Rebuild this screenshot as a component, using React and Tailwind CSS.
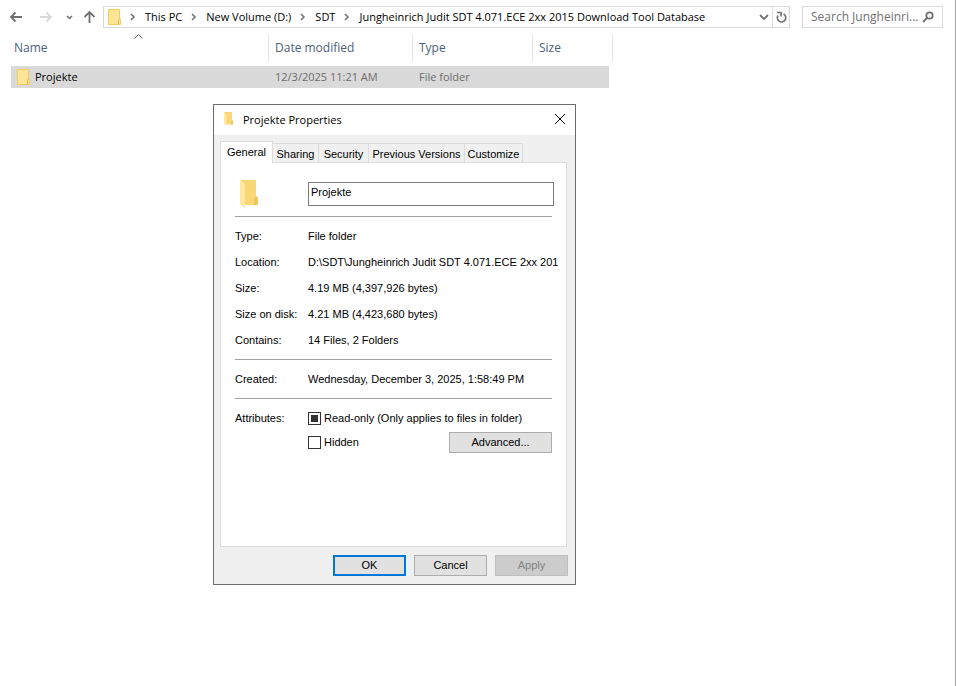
import React, { useEffect, useRef } from 'react';

const crumbs = [
  'This PC',
  'New Volume (D:)',
  'SDT',
  'Jungheinrich Judit SDT 4.071.ECE 2xx 2015 Download Tool Database',
];

const tabs = [
  { name: 'Sharing', width: 'w-[46px]' },
  { name: 'Security', width: 'w-[50px]' },
  { name: 'Previous Versions', width: 'w-[96px]' },
  { name: 'Customize', width: 'w-[58px]' },
];

const details = [
  ['Type:', 'File folder'],
  ['Location:', 'D:\\SDT\\Jungheinrich Judit SDT 4.071.ECE 2xx 201'],
  ['Size:', '4.19 MB (4,397,926 bytes)'],
  ['Size on disk:', '4.21 MB (4,423,680 bytes)'],
  ['Contains:', '14 Files, 2 Folders'],
];

const SmallFolder = () => (
  <svg width="13" height="16" viewBox="0 0 13 16" className="shrink-0">
    <path d="M.5.5h11v9l1 1v5H.5z" fill="#ffe594" stroke="#efcd62" />
    <path d="M10.5 15.5v-4l1.500-2" fill="none" stroke="#e3b84b" />
  </svg>
);

const OpenFolder = ({ className }) => (
  <svg viewBox="0 0 18 28" className={className}>
    <path d="M1 0h15v16l2 2v7H5z" fill="#f8d775" />
    <path d="M14 18l2-2 2 2v7h-4z" fill="#efc65e" />
    <path d="M0 0l5 4v24l-5-4z" fill="#ffe8a3" />
  </svg>
);

const Chevron = () => (
  <svg width="6" height="8" viewBox="0 0 6 8" fill="none" stroke="#707070" strokeWidth="1.500">
    <path d="M1 1l3 3-3 3" />
  </svg>
);

const AddressBar = () => (
  <div className="flex items-center pt-1.5 pl-2 pr-3">
    <div className="flex items-center w-[95px] shrink-0 text-[#707070]">
      <button aria-label="Back" className="w-[16px] flex justify-center">
        <svg width="14" height="12" viewBox="0 0 14 12" fill="none" stroke="currentColor" strokeWidth="1.800">
          <path d="M13 6H2M6.500 1.500L2 6l4.500 4.500" />
        </svg>
      </button>
      <button aria-label="Forward" className="w-[16px] ml-3.5 flex justify-center text-[#dadada]">
        <svg width="14" height="12" viewBox="0 0 14 12" fill="none" stroke="currentColor" strokeWidth="1.800">
          <path d="M1 6h11M7.500 1.500L12 6l-4.500 4.500" />
        </svg>
      </button>
      <button aria-label="Recent locations" className="w-[8px] ml-3">
        <svg width="7" height="5" viewBox="0 0 7 5" fill="none" stroke="currentColor" strokeWidth="1.500">
          <path d="M1 1l2.500 2.500L6 1" />
        </svg>
      </button>
      <button aria-label="Up" className="w-[14px] ml-2">
        <svg width="14" height="14" viewBox="0 0 14 14" fill="none" stroke="currentColor" strokeWidth="1.800">
          <path d="M7.500 13V2M2.500 7l5-5 5 5" />
        </svg>
      </button>
    </div>
    <nav className="flex items-center flex-1 min-w-0 h-[22px] border border-[#d9d9d9] pl-1 text-[11px] text-black">
      <SmallFolder />
      {crumbs.map((crumb) => (
        <React.Fragment key={crumb}>
          <span className="flex justify-center w-6 shrink-0"><Chevron /></span>
          <a href="#" className="whitespace-nowrap">{crumb}</a>
        </React.Fragment>
      ))}
      <button aria-label="Previous locations" className="ml-auto pr-[3px] text-[#707070]">
        <svg width="10" height="7" viewBox="0 0 10 7" fill="none" stroke="currentColor" strokeWidth="1.800">
          <path d="M1 1l4 4 4-4" />
        </svg>
      </button>
      <button aria-label="Refresh" className="flex items-center justify-center w-[17px] h-full border-l border-[#d9d9d9] text-[#707070]">
        <svg width="11" height="12" viewBox="0 0 11 12" fill="none" stroke="currentColor" strokeWidth="1.600">
          <path d="M7.500 3A4.200 4.200 0 1 1 2 4.500M1 1.500h4v4" />
        </svg>
      </button>
    </nav>
    <div className="flex items-center w-[141px] h-[22px] ml-3 shrink-0 border border-[#d9d9d9] pl-2 pr-2">
      <input
        aria-label="Search"
        placeholder="Search Jungheinri..."
        className="w-full min-w-0 outline-none placeholder:text-[#707070]"
      />
      <svg width="12" height="12" viewBox="0 0 12 12" fill="none" stroke="#707070" strokeWidth="1.800" className="shrink-0">
        <circle cx="7.500" cy="4.500" r="3.200" />
        <path d="M5 7L1 11" />
      </svg>
    </div>
  </div>
);

const FileList = () => (
  <table className="w-[602px] ml-[11px] mt-1.5 table-fixed border-separate border-spacing-0 text-left">
    <colgroup>
      <col className="w-[258px]" />
      <col className="w-[144px]" />
      <col className="w-[120px]" />
      <col className="w-[80px]" />
    </colgroup>
    <thead>
      <tr className="text-[#4c607a]">
        <th className="relative h-[28px] pl-[3px] font-normal border-r border-[#e5e5e5]">
          Name
          <svg width="9" height="5" viewBox="0 0 9 5" fill="none" stroke="#666666" className="absolute left-[123px] top-0">
            <path d="M.5 4.500l4-4 4 4" />
          </svg>
        </th>
        <th className="pl-1.5 font-normal border-r border-[#e5e5e5]">Date modified</th>
        <th className="pl-1.5 font-normal border-r border-[#e5e5e5]">Type</th>
        <th className="pl-1.5 font-normal border-r border-[#e5e5e5]">Size</th>
      </tr>
    </thead>
    <tbody>
      <tr><td colSpan={4} className="h-1" /></tr>
      <tr className="text-[11px] text-[#6d6d6d]">
        <td className="h-[22px] pl-1.5 bg-[#d9d9d9] text-black">
          <div className="flex items-center gap-[5px]"><SmallFolder />Projekte</div>
        </td>
        <td className="pl-1.5 bg-[#d9d9d9]">12/3/2025 11:21 AM</td>
        <td className="pl-1.5 bg-[#d9d9d9]">File folder</td>
        <td className="bg-[#d9d9d9] border-r-4 border-white" />
      </tr>
    </tbody>
  </table>
);

const Row = ({ label, children }) => (
  <div className="flex h-[26px] items-center whitespace-nowrap">
    <dt className="w-[73px] shrink-0">{label}</dt>
    <dd>{children}</dd>
  </div>
);

const PropertiesDialog = () => {
  const readOnly = useRef(null);

  useEffect(() => {
    readOnly.current.indeterminate = true;
  }, []);

  return (
    <div
      role="dialog"
      aria-label="Projekte Properties"
      className="absolute left-[213px] top-[104px] w-[363px] border border-[#6b6b6b] bg-[#f0f0f0] font-['Liberation_Sans',sans-serif] text-[11px] leading-[13px] text-black"
    >
      <div className="flex items-center h-[30px] pl-2.5 pr-2.5 pb-0.5 bg-white">
        <OpenFolder className="w-[9px] h-[14px]" />
        <h1 className="ml-2.5 font-['Open_Sans',sans-serif] text-[11px]">Projekte Properties</h1>
        <button aria-label="Close" className="ml-auto">
          <svg width="10" height="10" viewBox="0 0 10 10" stroke="#000" className="block">
            <path d="M0 0l10 10M10 0L0 10" />
          </svg>
        </button>
      </div>

      <div className="px-1.5 pt-1.5 pr-2">
        <div role="tablist" className="flex items-end">
          <button role="tab" aria-selected="true" className="relative z-10 -mb-px w-[53px] h-[22px] bg-white border border-b-0 border-[#dcdcdc]">
            General
          </button>
          {tabs.map((tab) => (
            <button
              role="tab"
              aria-selected="false"
              key={tab.name}
              className={`${tab.width} h-[19px] pt-0.5 border border-b-0 border-l-0 border-[#dcdcdc] whitespace-nowrap`}
            >
              {tab.name}
            </button>
          ))}
        </div>

        <div className="h-[385px] bg-white border border-[#dcdcdc] pl-3.5 pr-3">
          <div className="flex items-center pt-[17px]">
            <OpenFolder className="w-[18px] h-[28px] ml-[5px]" />
            <input
              aria-label="Folder name"
              defaultValue="Projekte"
              className="ml-auto w-[246px] h-[24px] px-0.5 pb-1 border border-[#7a7a7a] outline-none"
            />
          </div>
          <hr className="mt-2 mr-0.5 mb-1.5 border-[#a0a0a0]" />
          <dl>
            {details.map(([label, value]) => (
              <Row key={label} label={label}>{value}</Row>
            ))}
          </dl>
          <hr className="mt-1.5 mr-0.5 mb-1.5 border-[#a0a0a0]" />
          <dl>
            <Row label="Created:">Wednesday, December 3, 2025, 1:58:49 PM</Row>
          </dl>
          <hr className="mt-1.5 mr-0.5 border-[#a0a0a0]" />
          <div className="flex pt-[13px] mr-0.5">
            <span className="w-[73px] shrink-0">Attributes:</span>
            <div className="flex-1">
              <label className="flex items-center gap-[3px] whitespace-nowrap">
                <input
                  ref={readOnly}
                  type="checkbox"
                  className="appearance-none w-[13px] h-[13px] border border-[#333333] bg-white indeterminate:bg-[#333333] indeterminate:shadow-[inset_0_0_0_2px_white]"
                />
                Read-only (Only applies to files in folder)
              </label>
              <div className="flex justify-between mt-[7px]">
                <label className="flex items-center gap-[3px] h-5">
                  <input type="checkbox" className="appearance-none w-[13px] h-[13px] border border-[#333333] bg-white" />
                  Hidden
                </label>
                <button className="w-[103px] h-[21px] bg-[#e1e1e1] border border-[#adadad]">Advanced...</button>
              </div>
            </div>
          </div>
        </div>
      </div>

      <div className="flex justify-end gap-2 pt-2 pb-2 pr-[7px]">
        <button className="w-[73px] h-[21px] bg-[#e1e1e1] border-2 border-[#0078d7]">OK</button>
        <button className="w-[73px] h-[21px] bg-[#e1e1e1] border border-[#adadad]">Cancel</button>
        <button disabled className="w-[73px] h-[21px] bg-[#cccccc] border border-[#bfbfbf] text-[#838383]">Apply</button>
      </div>
    </div>
  );
};

export default function App() {
  return (
    <main className="relative min-h-screen bg-white border-r border-[#a0a0a0] font-['Open_Sans',sans-serif] text-[12px] leading-4">
      <AddressBar />
      <FileList />
      <PropertiesDialog />
    </main>
  );
}
